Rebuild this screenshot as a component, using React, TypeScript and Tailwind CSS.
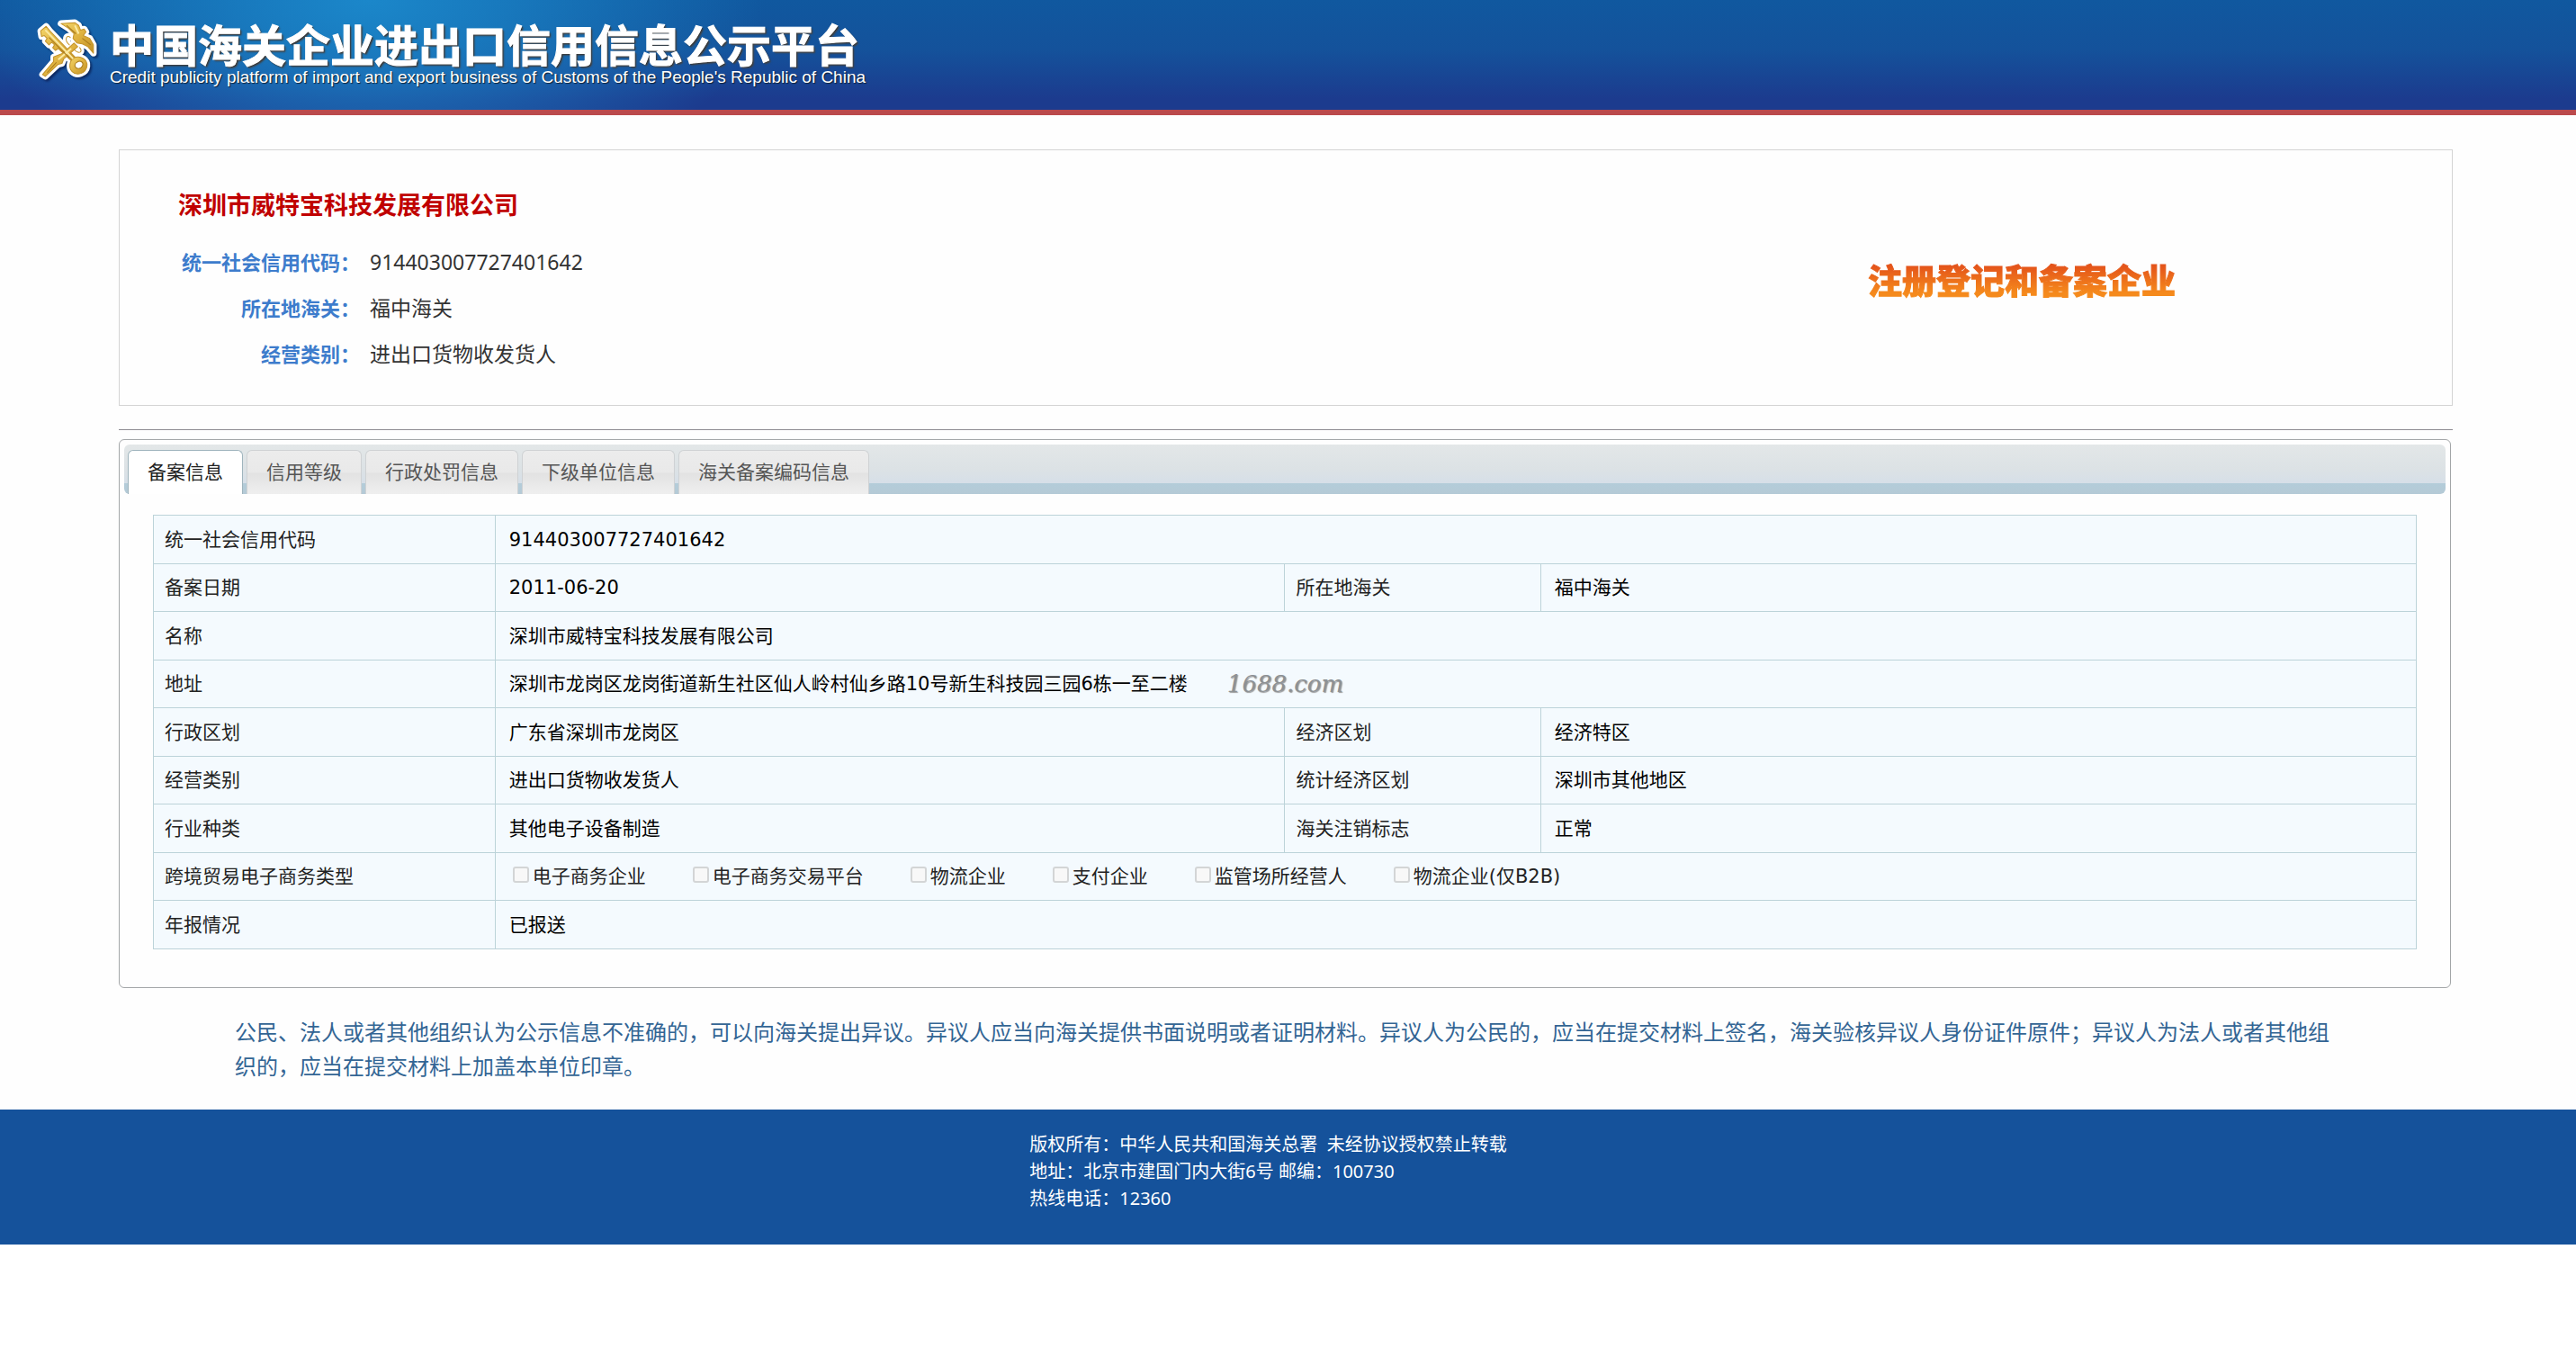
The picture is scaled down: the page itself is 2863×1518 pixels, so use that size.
import { useState, type ReactNode } from "react";

const tabs = ["备案信息", "信用等级", "行政处罚信息", "下级单位信息", "海关备案编码信息"];

const businessTypes = ["电子商务企业", "电子商务交易平台", "物流企业", "支付企业", "监管场所经营人", "物流企业(仅B2B)"];

const summary = [
    { label: "统一社会信用代码：", value: "914403007727401642" },
    { label: "所在地海关：", value: "福中海关" },
    { label: "经营类别：", value: "进出口货物收发货人" },
];

function Emblem() {
    return (
        <svg viewBox="0 0 66 68" className="h-[70px] w-[68px] shrink-0 drop-shadow-[2px_2px_1px_rgba(0,0,40,0.5)]" aria-hidden="true">
            <defs>
                <linearGradient id="gold" x1="0" y1="0" x2="1" y2="1">
                    <stop offset="0" stopColor="#f3d56a" />
                    <stop offset="0.5" stopColor="#dfb240" />
                    <stop offset="1" stopColor="#c08e22" />
                </linearGradient>
                <g id="emblem-shape" strokeLinejoin="round" strokeLinecap="round">
                    <path d="M27 6 L42 5 L46 8 L48 13 L52 12 L54 15 L51 19 L58 22 L62 29 L62 38 L56 31 L50 28 L44 27 L40 22 L41 17 L35 11 Z" />
                    <path d="M5 14 L11 9 L15 14 L43 43 L39 47 L24 33 L21 35 L18 32 L20 29 L17 26 L14 29 L10 25 L12 22 L9 19 L6 20 Z" />
                    <path d="M41 43 C48 40 56 45 55 52 C54 60 44 63 39 58 C35 54 36 46 41 43 Z" />
                    <path d="M41 27 L45 31 L30 44 L28 49 L24 50 L10 63 L7 61 L19 47 L19 42 L24 40 L29 38 Z" />
                    <path d="M36 29 C30 24 33 17 37 21 M41 34 C47 40 51 36 47 32" fill="none" />
                </g>
            </defs>
            <use href="#emblem-shape" fill="#fff" stroke="#fff" strokeWidth="7" />
            <use href="#emblem-shape" fill="url(#gold)" stroke="#c4932a" strokeWidth="1" />
            <path d="M44 48 C48 45 52 48 50 52 C48 56 43 55 42 52 C42 50 43 48 44 48 Z" fill="#fff" stroke="#a87a1c" />
            <path d="M10 13 L40 44 M42 8 L46 17 M38 33 L24 45" fill="none" stroke="#fbe9a0" strokeWidth="2" />
            <path d="M33 8 L43 17 M50 22 L59 29 M12 59 L22 48 M14 21 L36 43" fill="none" stroke="#a87a1c" strokeWidth="1" />
        </svg>
    );
}

function Header() {
    return (
        <header className="border-b-[6px] border-[#bb4a4c] bg-[radial-gradient(ellipse_440px_220px_at_410px_0px,#1b87ca_0%,#1b87cab0_35%,transparent_100%),linear-gradient(to_bottom,#10589f_0%,#14529b_45%,#1c3b8e_90%)]">
            <div className="flex h-[122px] items-start gap-3.5 pt-5 pl-10">
                <Emblem />
                <div className="text-white">
                    <h1 className="font-['Noto_Sans_CJK_SC',sans-serif] text-[49px] leading-[56px] font-bold [-webkit-text-stroke:1px_white] [text-shadow:1px_1px_1px_#333,2px_2px_2px_#444]">
                        中国海关企业进出口信用信息公示平台
                    </h1>
                    <p className="font-['Liberation_Sans',sans-serif] text-[19px] leading-5 [text-shadow:1px_1px_1px_#123]">
                        Credit publicity platform of import and export business of Customs of the People's Republic of China
                    </p>
                </div>
            </div>
        </header>
    );
}

function Summary() {
    return (
        <section className="flex h-[285px] items-start justify-between border border-[#d4d4d4] pt-[38px] pr-[307px] pl-[65px]">
            <div>
                <h2 className="text-[27px] leading-[46px] font-bold text-[#c00000]">深圳市威特宝科技发展有限公司</h2>
                <dl className="mt-[15px] grid grid-cols-[202px_auto] gap-x-[11px] text-[23px] leading-[51px]">
                    {summary.map(item => (
                        <div key={item.label} className="contents">
                            <dt className="text-right text-[22px] font-bold whitespace-nowrap text-[#3d7ccc]">{item.label}</dt>
                            <dd className="text-[#333]">{item.value}</dd>
                        </div>
                    ))}
                </dl>
            </div>
            <strong className="mt-[81px] bg-linear-to-b from-[#e4541a] from-20% to-[#f58a1c] to-80% bg-clip-text text-[38px] leading-[50px] font-black text-transparent [-webkit-text-stroke:1px_transparent]">
                注册登记和备案企业
            </strong>
        </section>
    );
}

function Label({ children }: { children: ReactNode }) {
    return <th scope="row" className="border border-[#bcd3d9] px-3 text-left font-normal text-[#222]">{children}</th>;
}

function Value({ children, span }: { children: ReactNode, span?: number }) {
    return <td colSpan={span} className="border border-[#bcd3d9] px-[15px] text-black">{children}</td>;
}

function RecordTable() {
    return (
        <table className="w-full table-fixed border-collapse bg-[#f4fafe] font-['DejaVu_Sans','Noto_Sans_CJK_SC',sans-serif] text-[21px] leading-7 [&_tr]:h-[53px] [&_tr:nth-child(odd)]:h-[54px]">
            <colgroup>
                <col className="w-[15.1%]" />
                <col className="w-[34.9%]" />
                <col className="w-[11.3%]" />
                <col className="w-[38.7%]" />
            </colgroup>
            <tbody>
                <tr><Label>统一社会信用代码</Label><Value span={3}>914403007727401642</Value></tr>
                <tr><Label>备案日期</Label><Value>2011-06-20</Value><Label>所在地海关</Label><Value>福中海关</Value></tr>
                <tr><Label>名称</Label><Value span={3}>深圳市威特宝科技发展有限公司</Value></tr>
                <tr>
                    <Label>地址</Label>
                    <Value span={3}>
                        <div className="flex items-center gap-11">
                            <span>深圳市龙岗区龙岗街道新生社区仙人岭村仙乡路10号新生科技园三园6栋一至二楼</span>
                            <em className="font-['DejaVu_Serif',serif] text-[26px] text-[#8d9194] [text-shadow:1px_1px_1px_#999]">1688.com</em>
                        </div>
                    </Value>
                </tr>
                <tr><Label>行政区划</Label><Value>广东省深圳市龙岗区</Value><Label>经济区划</Label><Value>经济特区</Value></tr>
                <tr><Label>经营类别</Label><Value>进出口货物收发货人</Value><Label>统计经济区划</Label><Value>深圳市其他地区</Value></tr>
                <tr><Label>行业种类</Label><Value>其他电子设备制造</Value><Label>海关注销标志</Label><Value>正常</Value></tr>
                <tr>
                    <Label>跨境贸易电子商务类型</Label>
                    <Value span={3}>
                        <div className="flex gap-[52px] pl-1 text-[#222]">
                            {businessTypes.map(type => (
                                <label key={type} className="flex items-start gap-1 whitespace-nowrap">
                                    <input type="checkbox" disabled className="mt-[3px] size-[18px] appearance-none rounded-[3px] border-2 border-[#d3d5d6] bg-[#f8f8f8]" />
                                    {type}
                                </label>
                            ))}
                        </div>
                    </Value>
                </tr>
                <tr><Label>年报情况</Label><Value span={3}>已报送</Value></tr>
            </tbody>
        </table>
    );
}

function Records() {
    const [active, setActive] = useState(0);

    return (
        <section className="mr-0.5 rounded-md border border-[#a3a6a8] px-[5px] pt-[5px] pb-[42px]">
            <div role="tablist" className="flex h-[55px] items-end gap-1 rounded-md bg-[linear-gradient(to_bottom,#e3e7e8_0%,#dce2e5_50%,#d6dfe8_78%,#b3ccd9_79%,#b5cad6_100%)] pl-1">
                {tabs.map((tab, i) => (
                    <button
                        key={tab}
                        type="button"
                        role="tab"
                        aria-selected={i === active}
                        onClick={() => setActive(i)}
                        className={
                            i === active
                                ? "h-[49px] rounded-t-md border border-b-0 border-[#9fb4bd] bg-white px-[21px] text-[21px] text-[#222]"
                                : "h-[49px] rounded-t-md border border-b-0 border-[#cfd2d4] bg-[linear-gradient(to_bottom,#ececec_0%,#e9e9e9_50%,#e2e2e2_52%,#efefef_100%)] px-[21px] text-[21px] text-[#555]"
                        }
                    >
                        {tab}
                    </button>
                ))}
            </div>
            <div role="tabpanel" className="mt-[23px] pr-8 pl-8">
                <RecordTable />
            </div>
        </section>
    );
}

export default function App() {
    return (
        <div className="bg-[#fefefe] font-['Noto_Sans','Noto_Sans_CJK_SC',sans-serif]">
            <Header />
            <main className="pt-[38px] pr-[137px] pl-[132px]">
                <Summary />
                <hr className="mt-[26px] mb-2.5 border-[#8d8b92]" />
                <Records />
                <p className="px-[129px] pt-[30px] pb-[29px] text-[24px] leading-[38px] text-[#336594]">
                    公民、法人或者其他组织认为公示信息不准确的，可以向海关提出异议。异议人应当向海关提供书面说明或者证明材料。异议人为公民的，应当在提交材料上签名，海关验核异议人身份证件原件；异议人为法人或者其他组织的，应当在提交材料上加盖本单位印章。
                </p>
            </main>
            <footer className="flex justify-center bg-[#15529b] pt-6 pr-11 pb-9 text-[20px] leading-[30px] text-white">
                <address className="not-italic">
                    <p>版权所有：中华人民共和国海关总署&nbsp;&nbsp;未经协议授权禁止转载</p>
                    <p>地址：北京市建国门内大街6号 邮编：100730</p>
                    <p>热线电话：12360</p>
                </address>
            </footer>
        </div>
    );
}
